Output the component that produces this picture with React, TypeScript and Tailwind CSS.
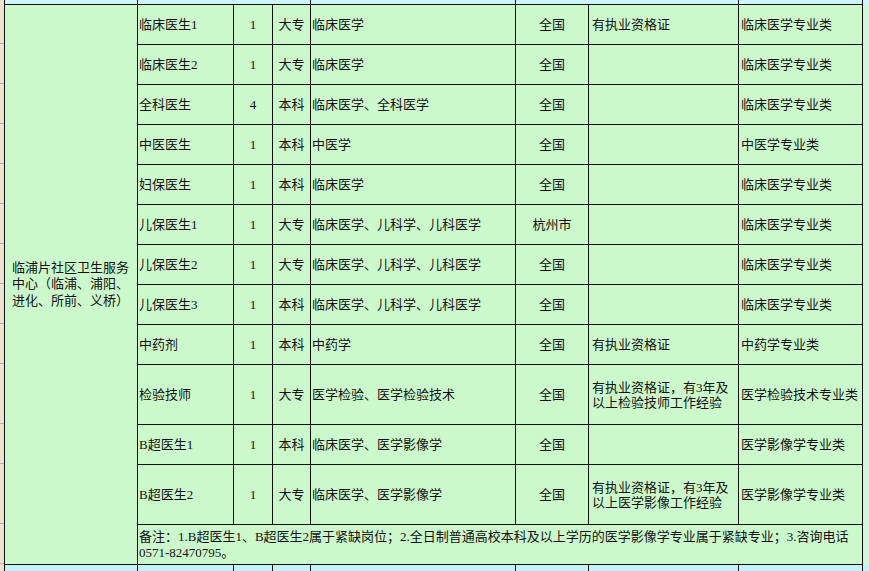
import React from "react";

const rows: string[][] = [
  ["临床医生1", "1", "大专", "临床医学", "全国", "有执业资格证", "临床医学专业类"],
  ["临床医生2", "1", "大专", "临床医学", "全国", "", "临床医学专业类"],
  ["全科医生", "4", "本科", "临床医学、全科医学", "全国", "", "临床医学专业类"],
  ["中医医生", "1", "本科", "中医学", "全国", "", "中医学专业类"],
  ["妇保医生", "1", "本科", "临床医学", "全国", "", "临床医学专业类"],
  ["儿保医生1", "1", "大专", "临床医学、儿科学、儿科医学", "杭州市", "", "临床医学专业类"],
  ["儿保医生2", "1", "大专", "临床医学、儿科学、儿科医学", "全国", "", "临床医学专业类"],
  ["儿保医生3", "1", "本科", "临床医学、儿科学、儿科医学", "全国", "", "临床医学专业类"],
  ["中药剂", "1", "本科", "中药学", "全国", "有执业资格证", "中药学专业类"],
  ["检验技师", "1", "大专", "医学检验、医学检验技术", "全国", "有执业资格证，有3年及|以上检验技师工作经验", "医学检验技术专业类"],
  ["B超医生1", "1", "本科", "临床医学、医学影像学", "全国", "", "医学影像学专业类"],
  ["B超医生2", "1", "大专", "临床医学、医学影像学", "全国", "有执业资格证，有3年及|以上医学影像工作经验", "医学影像学专业类"],
];

const cell = "bg-[#ccf9cc] flex items-center whitespace-nowrap";

function Strip({ bg, all }: { bg: string; all: boolean }) {
  const line = "w-px shrink-0 bg-[#111]";
  const none = "w-px shrink-0";
  return (
    <div className={`flex h-full ${bg}`}>
      <div className="w-[4px] shrink-0 bg-[#ece3d3]" />
      <div className={line} />
      <div className="w-[132px] shrink-0" />
      <div className={line} />
      <div className="w-[95px] shrink-0" />
      <div className={all ? line : none} />
      <div className="w-[38px] shrink-0" />
      <div className={all ? line : none} />
      <div className="w-[37px] shrink-0" />
      <div className={line} />
      <div className="w-[204px] shrink-0" />
      <div className={line} />
      <div className="w-[72px] shrink-0" />
      <div className={all ? line : none} />
      <div className="w-[149px] shrink-0" />
      <div className={line} />
      <div className="w-[123px] shrink-0" />
      <div className={line} />
      <div className="w-[6px] shrink-0" />
    </div>
  );
}

export default function App() {
  const leftHeights = [
    "h-[40px]", "h-[40px]", "h-[40px]", "h-[40px]", "h-[40px]", "h-[40px]", "h-[40px]", "h-[40px]", "h-[40px]",
    "h-[60px]", "h-[40px]", "h-[60px]", "h-[40px]",
  ];
  return (
    <div className="w-[869px] h-[571px] overflow-hidden text-[13px] text-[#111] [font-family:'Liberation_Serif','Noto_Sans_CJK_SC',sans-serif]">
      <div className="h-[4px]">
        <Strip bg="bg-[#cdf5fb]" all={false} />
      </div>
      <div className="flex h-[561px]">
        <div className="w-[4px] shrink-0 bg-[#ece3d3] flex flex-col">
          {leftHeights.map((h, i) => (
            <div key={i} className={`${h} shrink-0 border-b border-[#b9b2a6]`} />
          ))}
        </div>
        <div className="grid grid-cols-[132px_95px_38px_37px_204px_72px_149px_123px] grid-rows-[repeat(9,39px)_59px_39px_59px_39px] gap-px p-px bg-[#111]">
          <div className="bg-[#ccf9cc] [grid-row:span_13/span_13] flex items-center pl-[7px] leading-[16.5px]">
            <div>
              临浦片社区卫生服务<br />中心（临浦、浦阳、<br />进化、所前、义桥）
            </div>
          </div>
          {rows.map((r, i) => (
            <React.Fragment key={i}>
              <div className={`${cell} pl-px`}>{r[0]}</div>
              <div className={`${cell} justify-center`}>{r[1]}</div>
              <div className={`${cell} justify-center`}>{r[2]}</div>
              <div className={`${cell} pl-px`}>{r[3]}</div>
              <div className={`${cell} justify-center`}>{r[4]}</div>
              <div className={`${cell} pl-[3px] leading-[15px]`}>
                <div>
                  {r[5].split("|").map((t, j) => (
                    <div key={j}>{t}</div>
                  ))}
                </div>
              </div>
              <div className={`${cell} pl-[2px]`}>{r[6]}</div>
            </React.Fragment>
          ))}
          <div className="bg-[#ccf9cc] col-span-7 flex items-center pl-[1px] leading-[16px] whitespace-nowrap">
            <div>
              备注：1.B超医生1、B超医生2属于紧缺岗位；2.全日制普通高校本科及以上学历的医学影像学专业属于紧缺专业；3.咨询电话
              <br />
              0571-82470795。
            </div>
          </div>
        </div>
        <div className="w-[6px] shrink-0 bg-[#cff8df]" />
      </div>
      <div className="h-[6px]">
        <Strip bg="bg-[#c2f3fa]" all={true} />
      </div>
    </div>
  );
}
